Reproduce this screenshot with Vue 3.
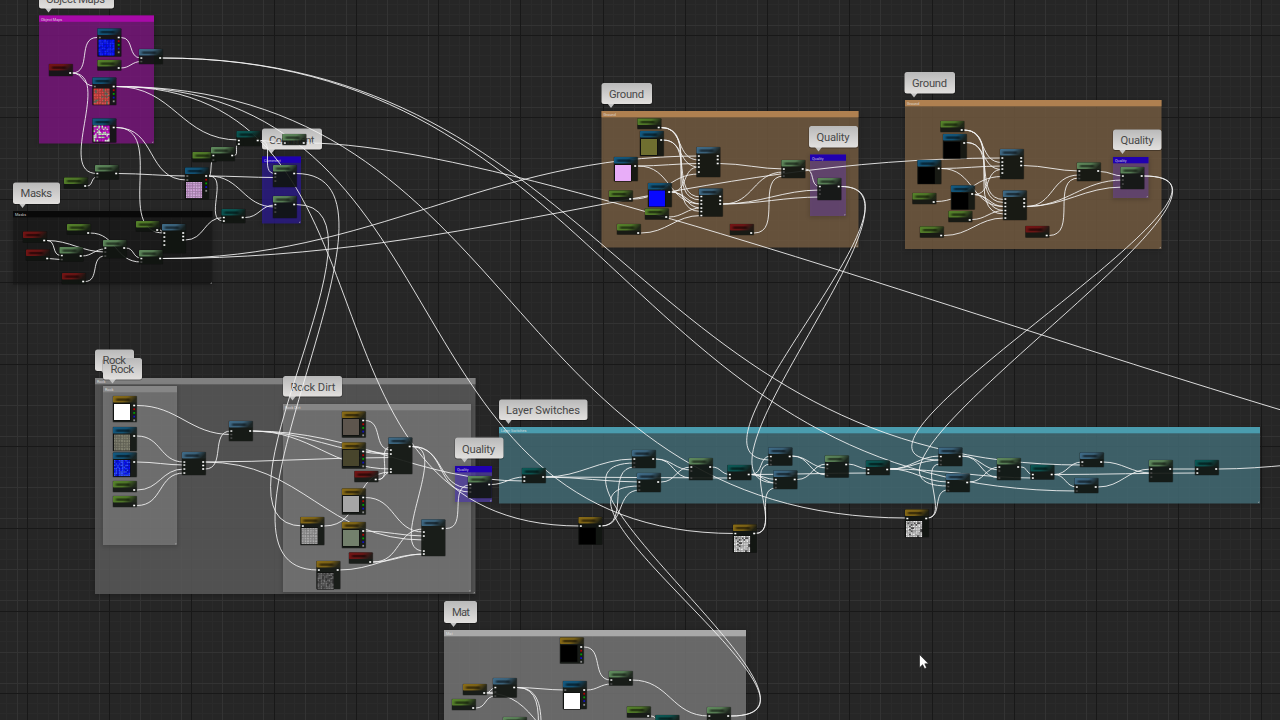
<script setup>
const range = (n) => Array.from({ length: n }, (_, i) => i)

// Background grid: 8 cells for each major square
const STEP = 10.281
const vLines = range(126).map((i) => ({ p: 27.5 + (i - 2) * STEP, k: (i + 6) % 8 }))
const hLines = range(72).map((i) => ({ p: 35.3 + (i - 3) * STEP, k: (i + 5) % 8 }))
const lineClass = (k, strong) => (k === 0 ? 'major' : k === 7 || k === strong ? 'minor' : 'faint')
const vGrid = vLines.map((l) => ({ p: Math.floor(l.p) + 0.5, c: lineClass(l.k, 3) }))
const hGrid = hLines.map((l) => ({ p: Math.floor(l.p) + 0.5, c: lineClass(l.k, 4) }))

// Comment boxes: x, y, width, height, header colour, body colour, title
const groups = [
  [39, 15.5, 115, 128, '#a80aa8', 'rgba(120,22,124,.83)', 'Object Maps'],
  [262, 156.5, 39, 67, '#1f00b0', 'rgba(42,26,132,.83)', 'Comment'],
  [13, 211, 199.5, 73.5, '#090909', 'rgba(20,20,20,.45)', 'Masks'],
  [601.5, 111, 257, 136.5, '#af8050', 'rgba(117,93,66,.82)', 'Ground'],
  [810, 154.5, 36, 61.5, '#2000b0', 'rgba(104,66,145,.6)', 'Quality'],
  [905, 100, 256.5, 149, '#af8050', 'rgba(117,93,66,.82)', 'Ground'],
  [1113, 157, 35.5, 41, '#2000b0', 'rgba(104,66,145,.6)', 'Quality'],
  [95, 378, 380.5, 216, '#808080', 'rgba(93,93,93,.82)', 'Rock'],
  [103, 386, 74, 159, '#868686', 'rgba(144,144,144,.55)', 'Rock'],
  [283, 404, 188, 188, '#868686', 'rgba(144,144,144,.55)', 'Rock Dirt'],
  [455, 466, 37, 36, '#2000b0', 'rgba(80,62,165,.75)', 'Quality'],
  [499, 427, 761, 76.5, '#4a9cae', 'rgba(68,110,119,.82)', 'Layer Switches'],
  [444, 630, 302, 100, '#a8a8a8', 'rgba(122,122,122,.8)', 'Mat'],
]

// Balloons: x, y, width, height, text x, text width, baseline, text
const bubbles = [
  [39, -15, 75, 23.5, 46, 59, 2.5, 'Object Maps'],
  [262, 128.5, 60, 21, 269, 45.5, 143.5, 'Comment'],
  [13, 182.5, 47, 21.5, 20.5, 31.5, 197.2, 'Masks'],
  [601.5, 83, 50.5, 21, 609, 35, 97.5, 'Ground'],
  [809, 126, 49, 21.5, 816.5, 33, 140.5, 'Quality'],
  [904.5, 72, 50.5, 21.5, 912, 35, 87, 'Ground'],
  [1113, 129.5, 48.5, 20.5, 1120.5, 33, 144, 'Quality'],
  [95, 349.5, 39, 21.5, 102.5, 23.5, 364.3, 'Rock'],
  [103, 358, 39, 21.5, 110.5, 23.5, 372.5, 'Rock'],
  [283, 376, 59, 20.5, 290.5, 45, 390.7, 'Rock Dirt'],
  [455, 437.5, 48.5, 21, 462, 33, 452.5, 'Quality'],
  [499, 399.5, 88.5, 20.5, 506, 74, 413.7, 'Layer Switches'],
  [444, 601, 33, 22, 452, 18, 616.2, 'Mat'],
]

// Nodes: kind, x, y, height, input offsets, output offsets, preview [fill, dy], channel pins
const RGB = 1
const nodes = [
  ['tex', 97.5, 28.5, 28, [9], [9], ['nblue', 11], RGB],
  ['grn', 97.5, 60, 10.5, [], [8]],
  ['stl', 139, 49, 15, [9, 12.5], [9]],
  ['red', 49, 64, 12, [], [9]],
  ['tex', 92.5, 77.5, 27.5, [9], [9], ['nred', 11], RGB],
  ['tex', 92.5, 118.5, 24, [], [9], ['nmag', 7]],
  ['tea', 236.5, 131, 15, [9.5, 13], [9.5]],
  ['lgr', 282.5, 134, 11, [9], [9]],
  ['lgr', 95, 165, 14.5, [8.5, 12], [8.5]],
  ['grn', 64, 177.5, 11, [], [8.5]],
  ['grn', 192.5, 152, 10, [], []],
  ['lgr', 211, 147, 14, [8.5, 13], [8.5]],
  ['tex', 185, 167.5, 31.5, [8.5, 12.5], [8.5], ['pink', 14.5], RGB],
  ['lgr', 273, 165, 22, [8.5, 12, 16], [8.5]],
  ['lgr', 273, 196, 22, [8.5, 12, 16], [8.5]],
  ['tea', 221.5, 209, 14, [8.5, 12], [8.5]],
  ['grn', 67, 224, 10.5, [], [9]],
  ['red', 23, 231.5, 11, [], [9]],
  ['red', 26, 249.5, 11, [], [9]],
  ['lgr', 59.5, 247, 14.5, [8.5, 12.5], [9]],
  ['lgr', 103, 240, 18, [8, 12, 16], [8]],
  ['grn', 136, 221, 10.5, [], [9]],
  ['stl', 162, 224, 29, [9, 13, 17, 21], [9, 12.5, 16]],
  ['lgr', 139, 250, 14, [8.5, 12], [8.5]],
  ['red', 62, 273, 11, [], [8.5]],

  ['grn', 637.5, 118.5, 10.5, [], [9]],
  ['tex', 640, 131, 25, [], [9], ['#6f6f30', 8]],
  ['tex', 614, 157, 24, [], [9], ['#e8adf8', 8]],
  ['grn', 609, 190.5, 11, [], [8.5]],
  ['tex', 648, 183, 24, [], [9], ['#0808ff', 7.5]],
  ['grn', 645, 208.5, 11, [], [8.5]],
  ['grn', 617, 224, 10.5, [], [9]],
  ['stl', 696.5, 147, 30, [9, 13, 16.5, 20, 25], [9, 12.5, 16.5]],
  ['stl', 699, 188.5, 28, [8, 12, 15.5, 19.5, 23, 27], [8, 12, 15.5]],
  ['lgr', 781.5, 160, 18, [9, 12, 16], [9]],
  ['red', 730, 224, 11, [], [9]],
  ['lgr', 817.5, 178, 22, [8.5, 12, 16], [8.5]],

  ['grn', 940.5, 121, 11, [], [9]],
  ['tex', 943, 134, 24.5, [], [9], ['#000', 8]],
  ['tex', 917.5, 160, 24, [], [8.5], ['#000', 7.5]],
  ['grn', 912.5, 193, 11, [], [9]],
  ['tex', 951, 185.5, 24, [], [8.5], ['#000', 7.5]],
  ['grn', 948.5, 211, 11, [], [9]],
  ['grn', 920, 226.5, 11, [], [9]],
  ['stl', 1000, 149, 30, [9, 13, 16.5, 20, 24], [9, 12.5, 16.5]],
  ['stl', 1003, 190.5, 29.5, [8.5, 12.5, 16, 20, 23.5, 27.5], [8.5, 12.5, 16]],
  ['lgr', 1077, 162.5, 18.5, [8.5, 12.5, 16], [8.5]],
  ['red', 1025.5, 226, 11.5, [], [9.5]],
  ['lgr', 1120.5, 167, 22, [9, 13, 17], [9]],

  ['gld', 113, 396, 26, [], [9.5], ['#fff', 8], RGB],
  ['tex', 113, 427, 24, [], [9], ['nstone', 7.5]],
  ['tex', 113, 452.5, 24.5, [], [9.5], ['nblue2', 7.5]],
  ['grn', 113, 481, 11, [], [9]],
  ['grn', 113, 496, 11, [], [9.5]],
  ['stl', 182, 452, 23, [10, 13, 17, 21], [10, 13.5, 17]],
  ['stl', 229, 421, 20, [10, 13.5, 17], [10]],
  ['gld', 342, 411.5, 26, [], [9], ['#5d554d', 7.5], RGB],
  ['gld', 342, 442.5, 26, [], [9], ['#48452c', 7.5], RGB],
  ['red', 354.5, 471, 11, [], [8.5]],
  ['stl', 388.5, 437.5, 36.5, [12.5, 16.5, 31.5, 34.5], [9]],
  ['gld', 342, 488.5, 26, [], [9], ['#a6a6a6', 7.5], RGB],
  ['gld', 342, 522, 26, [], [9], ['#73806c', 8], RGB],
  ['red', 349, 552.5, 11, [], [9.5]],
  ['gld', 300.5, 517, 28, [9], [9], ['ngrey', 11]],
  ['gld', 316.5, 561, 28, [9], [9], ['ndark', 12]],
  ['stl', 421.5, 519.5, 36.5, [12.5, 16.5, 31.5, 34.5], [9]],
  ['lgr', 468, 476, 22, [8.5, 12, 16], [8.5]],

  ['tea', 522, 468, 15, [9, 13], [9]],
  ['gld', 578.5, 517, 27.5, [9], [9], ['#000', 11]],
  ['stl', 632, 450, 18, [9, 13, 17], [9]],
  ['stl', 637, 473, 19, [9, 13, 17], [9]],
  ['lgr', 689, 458, 22, [9, 13, 20], [9]],
  ['tea', 727.5, 465, 15, [9.5, 13], [9.5]],
  ['stl', 768.5, 447.5, 18, [9, 13, 17], [9]],
  ['stl', 773.5, 470.5, 18.5, [9, 13, 17], [9]],
  ['lgr', 825, 455.5, 22, [9, 13, 20], [9]],
  ['tea', 866, 460.5, 14.5, [9, 12.5], [9]],
  ['gld', 733, 524.5, 28, [9], [9], ['ncloud', 11.5]],
  ['gld', 905, 509.5, 27.5, [9], [9], ['ncloud', 11.5]],
  ['stl', 938.5, 447.5, 18.5, [9, 13, 17], [9]],
  ['stl', 946, 473.5, 18.5, [9, 13, 17], [9]],
  ['lgr', 997, 458, 22, [9, 13, 20], [9]],
  ['tea', 1030.5, 465, 14.5, [9.5, 13], [9.5]],
  ['stl', 1080, 452.5, 14.5, [9.5, 13], [9.5]],
  ['stl', 1074.5, 478, 15, [9, 13], [9]],
  ['lgr', 1149, 460, 22, [9, 13, 17], [9]],
  ['tea', 1195, 460, 15, [9, 13], [9]],

  ['gld', 560, 637.5, 26, [], [9.5], ['#000', 8], RGB],
  ['lgr', 609, 671, 14.5, [9, 13], [9]],
  ['tex', 563, 681, 28, [9], [9], ['#fff', 12], RGB],
  ['stl', 493, 678, 19.5, [9.5, 14, 18], [9.5]],
  ['gld', 463, 684, 11, [], [9]],
  ['grn', 452, 699, 11, [], [9]],
  ['lgr', 503, 717, 14, [], []],
  ['grn', 627, 706.5, 11, [], [9.5]],
  ['tea', 655.5, 715, 14, [], []],
  ['lgr', 707, 707, 14, [9, 13], [9]],
].map(([kind, x, y, h, ins, outs, pic, rgb]) => ({ kind, x, y, h, ins, outs, pic, rgb }))

const kinds = {
  tex: '#125a82', grn: '#56832a', lgr: '#5f8a5c', stl: '#3f6b88',
  red: '#741414', gld: '#8a6c16', tea: '#0a5855',
}
const channels = ['#b00000', '#00a000', '#1010c0', '#8c8c8c']
const pinColor = (n, k) => {
  if (n.pic) return n.kind === 'gld' ? '#fff' : '#777'
  if (n.h > 23 || n.kind === 'tea') return '#fff'
  return k === 0 || n.h === 23 ? '#eee' : '#4c4c4c'
}

// Preview textures built from small cells
const palettes = {
  nblue: ['#0a10f8', '#1420ff', '#0410e8', '#1828ff'],
  nblue2: ['#0a10f8', '#2848ff', '#0410d0', '#0818ff', '#3050ff'],
  nred: ['#d8403c', '#c84848', '#e0504a', '#b0504c', '#6c7060', '#d85050'],
  nmag: ['#c828c8', '#c8f0c0', '#b010b8', '#e0d8e0', '#b8d8b0', '#c010c8'],
  pink: ['#cda2d6', '#c898d0', '#d0a8da'],
  nstone: ['#7c7c6c', '#828271', '#77776a'],
  ngrey: ['#a4a4a4', '#9c9c9c', '#aaaaaa'],
  ndark: ['#4a4a4a', '#686868', '#5c5c5c', '#3c3c3c', '#747474'],
  ncloud: ['#d8d8d8', '#c4c4c4', '#ececec', '#a8a8a8', '#505050', '#d0d0d0'],
}
function hash(i, s) {
  let h = Math.imul(i + 1, 374761393) + Math.imul(s, 668265263)
  h = Math.imul(h ^ (h >>> 13), 1274126177)
  return ((h ^ (h >>> 16)) >>> 0) / 4294967296
}
const tiles = Object.entries(palettes).map(([id, colors], s) => ({
  id,
  cells: range(100).map((i) => ({
    x: (i % 10) * 1.6,
    y: Math.floor(i / 10) * 1.6,
    f: colors[Math.floor(hash(i, s + 3) * colors.length)],
  })),
}))

// Wires: x1, y1, x2, y2 and an optional tangent length
const groundLinks = (dx, dy) => [
  [661, 127.5, 699, 160], [661, 127.5, 701, 200], [661, 127.5, 701, 211.5],
  [663, 140, 699, 167], [663, 140, 701, 197],
  [638, 166, 699, 163.5], [638, 166, 701, 204],
  [633, 199, 699, 174], [671, 192, 699, 167], [671, 192, 701, 204], [671, 192, 701, 208],
  [669, 217, 701, 208], [641, 233, 701, 215.5],
].map(([a, b, c, d]) => [a + dx, b + dy, c + dx, d + dy])
const wires = [
  [72, 73, 97, 37.5], [72, 73, 94, 86], [72, 73, 97, 173.5],
  [121, 37.5, 141, 58], [121, 68, 141, 61.5],
  [116, 86.5, 239, 140], [116, 86.5, 580, 526], [116, 86.5, 735, 533.5], [116, 86.5, 907, 518],
  [162, 58, 1082, 465], [162, 58, 1077, 491],
  [116, 127.5, 187, 180], [116, 127.5, 164, 233],
  [118, 173.5, 187, 176], [87, 186, 97, 177],
  [209, 176, 213, 160, 3], [234, 155.5, 239, 144],
  [260, 140.5, 275, 173.5], [260, 140.5, 285, 143], [306, 143, 1700, 502, 275],
  [209, 176, 275, 177.5], [209, 176, 275, 207], [209, 176, 223.5, 221],
  [245, 217.5, 275, 205], [185, 240, 223.5, 217.5],
  [296, 173.5, 318, 570], [296, 204.5, 303, 526],
  [47, 240.5, 61, 255.5], [47, 240.5, 105, 252], [48, 258.5, 61, 259.5],
  [82, 256, 105, 249], [90, 233, 141, 262], [85, 281.5, 105, 256],
  [126, 248, 141, 258], [160, 230, 164, 233],
  [162, 258.5, 699, 156], [162, 258.5, 1002, 158],
  ...groundLinks(0, 0), [719, 163.5, 784, 169], [723, 204, 784, 172], [723, 204, 820, 190],
  [723, 204, 820, 197], [754, 233, 784, 176], [805, 169, 820, 186.5],
  ...groundLinks(303, 2.5), [1023, 165.5, 1079, 171], [1026, 206.5, 1079, 175], [1026, 206.5, 1123, 180],
  [1026, 206.5, 1123, 187], [1049, 235.5, 1079, 178], [1100, 171.5, 1123, 176],
  [841, 186.5, 771, 460, 106], [841, 186.5, 776, 483, 104],
  [1144, 176, 940, 460, 150], [1144, 176, 948, 486, 150],
  [731, 716, 635, 463], [731, 716, 640, 486],
  [137, 405.5, 231, 434.5], [137, 436, 184, 462], [137, 462, 184, 465], [137, 490, 184, 469],
  [137, 505.5, 184, 473], [205, 469, 231, 431], [205, 462, 391, 457.5], [205, 462, 424, 540],
  [252, 431, 391, 454], [252, 431, 391, 469], [252, 431, 524, 481],
  [365, 420.5, 391, 450], [365, 451, 391, 454], [378, 479.5, 391, 447], [378, 479.5, 391, 472],
  [324, 526, 391, 472], [365, 497.5, 424, 532], [365, 531, 424, 536], [373, 562, 424, 529],
  [373, 562, 424, 554], [339, 570, 424, 554],
  [412, 446.5, 470, 488], [412, 446.5, 470, 492], [412, 446.5, 424, 551], [446, 528.5, 470, 485],
  [491, 484.5, 524, 477],
  [545, 477, 634, 459], [545, 477, 640, 482], [545, 477, 730, 478],
  [601, 526, 635, 467], [601, 526, 640, 490],
  [656, 459, 691, 470], [656, 459, 691, 478], [661, 482, 691, 467], [712, 467, 730, 474.5],
  [751, 474.5, 771, 456], [751, 474.5, 776, 479.5], [751, 474.5, 776, 483], [751, 474.5, 868, 473],
  [755, 533.5, 771, 464], [755, 533.5, 776, 488],
  [792, 456, 827, 468], [792, 456, 827, 475], [797, 479.5, 827, 464], [848, 464, 868, 469],
  [890, 469, 940, 456], [890, 469, 940, 460], [890, 469, 948, 482], [890, 469, 1033, 478],
  [927, 518, 940, 464], [927, 518, 948, 490],
  [962, 456, 1000, 470], [962, 456, 1000, 478], [969, 482, 1000, 467], [1021, 467, 1033, 474.5],
  [1054, 474.5, 1082, 462], [1054, 474.5, 1077, 487], [1054, 474.5, 1197, 473],
  [1103, 462, 1151, 473], [1098, 487, 1151, 469], [1172, 469, 1197, 469], [1218, 469, 1360, 461],
  [584, 647, 611, 680], [587, 690, 611, 684], [632, 680, 709, 716],
  [517, 687.5, 565, 690], [517, 687.5, 560, 775], [517, 687.5, 565, 790],
  [486, 693, 495, 688], [486, 693, 495, 692], [486, 693, 590, 753], [476, 708, 495, 696],
  [651, 716, 662, 724],
]
function curve([x1, y1, x2, y2, t]) {
  const dx = x2 - x1
  const dy = Math.abs(y2 - y1)
  const c = t ?? (dx >= 0 ? (dx + dy) / 3 : 109 - dx * 0.23)
  return `M${x1} ${y1}C${x1 + c} ${y1} ${x2 - c} ${y2} ${x2} ${y2}`
}
</script>

<template>
  <svg class="graph" width="1280" height="720" viewBox="0 0 1280 720">
    <defs>
      <linearGradient v-for="(c, k) in kinds" :id="'h-' + k" :key="k" x1="0" y1="0" x2="1" y2=".28">
        <stop offset="0" :stop-color="c" />
        <stop offset=".6" :stop-color="c" stop-opacity=".85" />
        <stop offset="1" :stop-color="c" stop-opacity=".12" />
      </linearGradient>
      <linearGradient id="bubble" x1="0" y1="0" x2="0" y2="1">
        <stop offset="0" stop-color="#b9b9b9" />
        <stop offset="1" stop-color="#e2e0de" />
      </linearGradient>
      <filter id="soft" x="-30%" y="-100%" width="160%" height="300%">
        <feGaussianBlur stdDeviation="1.2 .7" />
      </filter>
      <filter id="shade" x="-10%" y="-10%" width="120%" height="120%">
        <feGaussianBlur stdDeviation="2" />
      </filter>
      <g v-for="t in tiles" :id="t.id" :key="t.id">
        <rect v-for="(c, i) in t.cells" :key="i" :x="c.x" :y="c.y" width="1.7" height="1.7" :fill="c.f" />
      </g>
    </defs>

    <rect width="1280" height="720" fill="#262626" />
    <g class="grid">
      <template v-for="k in ['faint', 'minor', 'major']" :key="k">
        <template v-for="(l, i) in vGrid" :key="'v' + i">
          <line v-if="l.c === k" :class="k" :x1="l.p" y1="0" :x2="l.p" y2="720" />
        </template>
        <template v-for="(l, i) in hGrid" :key="'h' + i">
          <line v-if="l.c === k" :class="k" x1="0" :y1="l.p" x2="1280" :y2="l.p" />
        </template>
      </template>
    </g>

    <g v-for="(g, i) in groups" :key="'g' + i">
      <rect :x="g[0] - 1" :y="g[1]" :width="g[2] + 2" :height="g[3] + 2" fill="#000" opacity=".15" filter="url(#shade)" />
      <rect :x="g[0]" :y="g[1]" :width="g[2]" :height="g[3]" :fill="g[5]" />
      <rect :x="g[0]" :y="g[1]" :width="g[2]" height="6.3" :fill="g[4]" />
      <text class="title" :x="g[0] + 2" :y="g[1] + 5">{{ g[6] }}</text>
      <path class="grip" :d="`M${g[0] + g[2] - 2} ${g[1] + g[3] - 1}h1v-1`" />
    </g>

    <g v-for="(b, i) in bubbles" :key="'b' + i">
      <rect :x="b[0] - 0.5" :y="b[1]" :width="b[2] + 1" :height="b[3] + 1" rx="3" fill="#000" opacity=".3" />
      <path :d="`M${b[0] + 6} ${b[1] + b[3] - 0.5}h7l-3.5 4.5z`" fill="#c4c4c4" />
      <rect :x="b[0]" :y="b[1]" :width="b[2]" :height="b[3]" rx="2.5" fill="url(#bubble)" />
    </g>
    <text v-for="(b, i) in bubbles" :key="'t' + i" class="label" :x="b[4]" :y="b[6]" :textLength="b[5]">{{ b[7] }}</text>

    <path v-for="(w, i) in wires" :key="'w' + i" class="wire" :d="curve(w)" />

    <g v-for="(n, i) in nodes" :key="'n' + i" :transform="`translate(${n.x} ${n.y})`">
      <rect x="-.5" y="-.3" width="24.7" :height="n.h + 0.8" rx="1" fill="#000" opacity=".35" />
      <rect width="23.7" :height="n.h" rx=".8" fill="#121612" opacity=".86" />
      <rect width="23.7" height="6.6" rx=".8" :fill="`url(#h-${n.kind})`" />
      <rect x="3" y="2.4" width="14" height="2.4" fill="#000" opacity=".5" filter="url(#soft)" />
      <template v-if="n.pic">
        <rect x=".5" :y="n.pic[1] - 0.5" width="17" height="17" fill="#080808" />
        <rect v-if="n.pic[0][0] === '#'" x="1" :y="n.pic[1]" width="16" height="16" :fill="n.pic[0]" />
        <use v-else :href="'#' + n.pic[0]" x="1" :y="n.pic[1]" />
      </template>
      <template v-if="n.rgb">
        <rect v-for="(c, k) in channels" :key="k" x="20.3" :y="n.outs[0] + 2.8 + k * 3.7" width="1.8" height="1.8" :fill="c" />
      </template>
      <rect v-for="(p, k) in n.ins" :key="'i' + k" x="1.4" :y="p - 0.7" width="1.9" height="1.5" :fill="pinColor(n, k)" />
      <rect v-for="(p, k) in n.outs" :key="'o' + k" x="20.2" :y="p - 0.8" width="2" height="1.6" fill="#fff" />
    </g>

    <path class="cursor" d="M919.5 654.5V667.7L922.6 664.7 924.6 668.7 926.6 667.7 924.8 663.8H928.6Z" />
  </svg>
</template>

<style scoped>
.graph {
  display: block;
  font-family: Roboto, "Liberation Sans", sans-serif;
}
.grid line {
  stroke-width: 1;
}
.faint {
  stroke: #2a2a2a;
}
.minor {
  stroke: #333333;
}
.major {
  stroke: #181818;
}
.title {
  font-size: 3.8px;
  fill: #e4e4e4;
  fill-opacity: 0.85;
}
.label {
  font-size: 11.2px;
  fill: #484848;
}
.grip {
  fill: none;
  stroke: #aaa;
  stroke-width: 0.6;
}
.wire {
  fill: none;
  stroke: #f4f4f4;
  stroke-width: 1;
  stroke-opacity: 0.88;
}
.cursor {
  fill: #fff;
  stroke: #181818;
  stroke-width: 0.6;
}
</style>

<style>
body {
  background: #262626;
  overflow: hidden;
}
</style>
